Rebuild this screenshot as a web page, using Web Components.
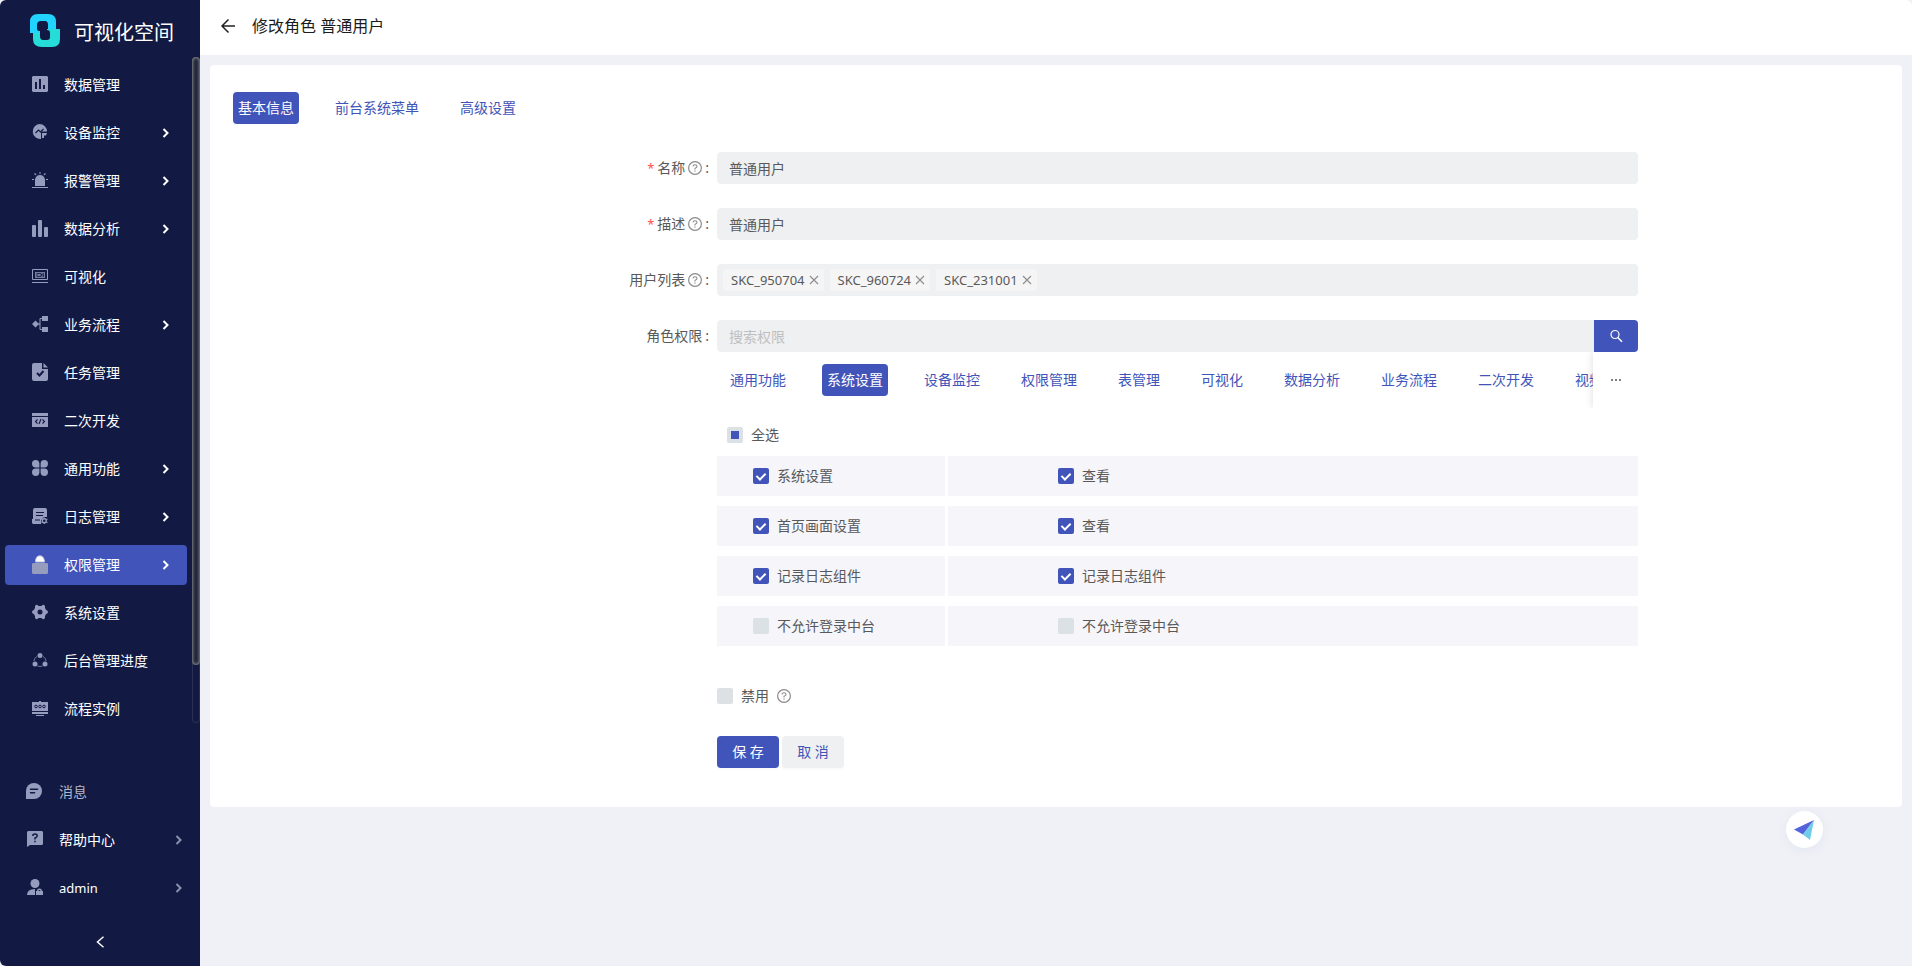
<!DOCTYPE html>
<html lang="zh-CN">
<head>
<meta charset="utf-8">
<title>可视化空间</title>
<style>
  html, body { margin: 0; }
  body {
    --primary: #4154b9;
    --side: #121a44;
    --page: #f0f1f6;
    --field: #eff0f2;
    --text: #595959;
    background: var(--page);
    color: var(--text);
    font: 14px/22px "Noto Sans", "Noto Sans CJK SC", sans-serif;
  }
</style>
</head>
<body>
<vis-app></vis-app>

<template id="vis-app">
  <style>
    :host { display: flex; min-height: 100vh; }
    main { flex: 1; min-width: 0; display: flex; flex-direction: column; }
    role-form { margin: 10px; }
  </style>
  <app-sidebar></app-sidebar>
  <main>
    <page-header>修改角色 普通用户</page-header>
    <role-form></role-form>
  </main>
  <assist-button></assist-button>
</template>

<template id="app-sidebar">
  <style>
    :host {
      display: flex; flex-direction: column; flex: none; box-sizing: border-box;
      width: 200px; height: 100vh; position: sticky; top: 0;
      background: var(--side); color: #fff; border-radius: 6px 0 0 6px;
    }
    .brand { display: flex; align-items: center; gap: 14px; height: 57px; padding: 4px 0 0 30px; box-sizing: border-box; flex: none; font-size: 20px; line-height: 28px; }
    .brand svg { width: 30px; height: 33px; }
    .brand span { padding-top: 4px; }
    .scroll { flex: 1; min-height: 0; display: flex; }
    nav { display: flex; flex-direction: column; gap: 8px; }
    .scroll nav { flex: 1; overflow: hidden; padding: 8px 5px 0; }
    .track { width: 8px; box-sizing: border-box; border-radius: 4px; box-shadow: inset 0 0 0 1px #2b3154; }
    .thumb { height: 608px; border-radius: 4px; background: #20263b; box-shadow: inset 0 0 3px 1px #858585; }
    .foot { flex: none; padding: 49px 6px 10px 0; }
    button { flex: none; display: flex; justify-content: center; align-items: center; height: 48px; border: 0; padding: 0; background: none; color: #fff; }
  </style>
  <div class="brand">
    <svg viewBox="0 0 30 33" aria-hidden="true">
      <path fill="#26dcd9" d="M3 17H10V22Q10 26 13 26H17Q20 26 20 23V19Q20 16 17 16V15H30V25Q30 33 22 33H12Q3 33 3 25Z"/>
      <path fill="#20d4ff" d="M0 19V8Q0 0 8 0H18Q26 0 26 8V15H18V11Q18 7 15 7H11Q7 7 7 11V15Q7 17 10 17V19Z"/>
    </svg>
    <span>可视化空间</span>
  </div>
  <div class="scroll">
    <nav aria-label="主菜单">
      <nav-item icon="data">数据管理</nav-item>
      <nav-item icon="monitor" more>设备监控</nav-item>
      <nav-item icon="alarm" more>报警管理</nav-item>
      <nav-item icon="bars" more>数据分析</nav-item>
      <nav-item icon="visual">可视化</nav-item>
      <nav-item icon="flow" more>业务流程</nav-item>
      <nav-item icon="task">任务管理</nav-item>
      <nav-item icon="code">二次开发</nav-item>
      <nav-item icon="clover" more>通用功能</nav-item>
      <nav-item icon="log" more>日志管理</nav-item>
      <nav-item icon="lock" more active>权限管理</nav-item>
      <nav-item icon="gear">系统设置</nav-item>
      <nav-item icon="nodes">后台管理进度</nav-item>
      <nav-item icon="screen">流程实例</nav-item>
    </nav>
    <div class="track"><div class="thumb"></div></div>
  </div>
  <nav class="foot" aria-label="用户菜单">
    <nav-item foot dim icon="message">消息</nav-item>
    <nav-item foot more icon="help">帮助中心</nav-item>
    <nav-item foot more latin icon="user">admin</nav-item>
  </nav>
  <button type="button" aria-label="收起菜单"><app-icon name="left"></app-icon></button>
</template>

<template id="nav-item">
  <style>
    :host { display: block; flex: none; }
    a { display: flex; align-items: center; box-sizing: border-box; height: 40px; padding: 0 17px 0 27px; gap: 16px; border-radius: 4px; color: #fff; text-decoration: none; }
    .icon { color: #969cbe; margin-bottom: 2px; }
    .label { flex: 1; }
    .more { display: none; }
    :host([more]) .more { display: block; }
    :host([active]) a { background: var(--primary); }
    :host([foot]) a { padding: 0 11px 0 26px; }
    :host([foot]) .more { color: #8a90ae; }
    :host([dim]) a { color: #b4b7c6; }
    :host([latin]) a { font-size: 13px; }
  </style>
  <a href="#"><app-icon class="icon"></app-icon><span class="label"><slot></slot></span><app-icon class="more" name="right"></app-icon></a>
</template>

<template id="page-header">
  <style>
    :host { display: flex; align-items: center; gap: 16px; height: 55px; box-sizing: border-box; padding: 0 20px 3px; background: #fff; color: #1c1c1c; border-radius: 0 6px 0 0; }
    button { display: flex; border: 0; padding: 0; background: none; color: #222; }
    h1 { margin: 0; font-size: 16px; line-height: 24px; font-weight: 400; }
  </style>
  <button type="button" aria-label="返回"><app-icon name="back"></app-icon></button>
  <h1><slot></slot></h1>
</template>

<template id="tab-list">
  <style>
    :host { display: flex; overflow: hidden; gap: 31px; }
    ::slotted(button) { flex: none; height: 32px; border: 0; border-radius: 4px; padding: 0 5px; background: none; color: var(--primary); font: inherit; white-space: nowrap; }
    ::slotted(button[aria-selected="true"]) { background: var(--primary); color: #fff; }
  </style>
  <slot></slot>
</template>

<template id="form-row">
  <style>
    :host { display: grid; grid-template-columns: 484fr 921fr 241fr; }
    .label { display: flex; justify-content: flex-end; align-items: center; height: 32px; gap: 3px; padding-right: 8px; }
    .label i { display: none; width: 7px; color: #ff4d4f; font-size: 13px; font-style: normal; }
    :host([required]) i { display: block; }
    app-icon { display: none; color: #8c8c8c; }
    :host([help]) app-icon { display: block; }
    :host([bare]) .label { visibility: hidden; }
    .control { min-width: 0; }
  </style>
  <div class="label"><i>*</i><slot name="label"></slot><app-icon name="question"></app-icon><span class="colon"></span></div>
  <div class="control"><slot></slot></div>
</template>

<template id="check-box">
  <style>
    :host { display: block; }
    label { display: flex; width: fit-content; align-items: center; gap: 8px; }
    input { appearance: none; margin: 0; width: 16px; height: 16px; border-radius: 2px; background: #dce1e5; display: grid; place-items: center; }
    input:checked { background: var(--primary); }
    input:checked::after { content: ""; width: 4px; height: 7px; margin-bottom: 2px; border: solid #fff; border-width: 0 2px 2px 0; transform: rotate(45deg); }
    input:indeterminate::after { content: ""; width: 8px; height: 8px; background: var(--primary); }
  </style>
  <label><input type="checkbox"><slot></slot></label>
</template>

<template id="user-tag">
  <style>
    :host { display: flex; align-items: center; gap: 4px; height: 22px; padding: 0 5px 0 8px; border-radius: 3px; background: #f5f5f5; font-size: 13px; }
    button { display: flex; border: 0; padding: 0; background: none; color: #8c8c8c; }
  </style>
  <slot></slot><button type="button" aria-label="移除"><app-icon name="close"></app-icon></button>
</template>

<template id="permission-row">
  <style>
    :host { display: grid; grid-template-columns: 228fr 690fr; gap: 3px; }
    div { display: flex; align-items: center; height: 40px; background: #f5f5fa; }
    .group { padding-left: 36px; }
    .items { padding-left: 110px; }
  </style>
  <div class="group"><slot name="group"></slot></div>
  <div class="items"><slot></slot></div>
</template>

<template id="role-form">
  <style>
    :host { display: block; padding: 27px 23px 39px; background: #fff; border-radius: 4px; }
    form { display: flex; flex-direction: column; gap: 24px; padding-top: 28px; }
    .field { box-sizing: border-box; width: 100%; height: 32px; border: 0; border-radius: 4px; padding: 0 12px; background: var(--field); color: var(--text); font: inherit; outline: 0; }
    .field::placeholder { color: #bfbfbf; opacity: 1; }
    .tags { display: flex; align-items: center; gap: 6px; padding: 0 6px; }
    .search { display: flex; }
    .search input { flex: 1; min-width: 0; border-radius: 4px 0 0 4px; }
    .search button { width: 44px; border: 0; border-radius: 0 4px 4px 0; padding: 0; display: grid; place-items: center; background: var(--primary); color: #fff; }
    .bar { display: flex; height: 56px; }
    .bar tab-list { flex: 1; min-width: 0; padding: 12px 0 12px 8px; }
    .bar .more { width: 45px; border: 0; padding: 0; background: #fff; color: #808080; display: grid; place-items: center; box-shadow: 0 0 8px rgba(0,0,0,.14); clip-path: inset(0 0 0 -10px); position: relative; }
    .all { padding: 16px 10px 10px; }
    .rows { display: flex; flex-direction: column; gap: 10px; }
    .off { display: flex; align-items: center; gap: 8px; height: 32px; margin-top: 10px; color: #8c8c8c; }
    .off check-box { color: var(--text); }
    .actions { display: flex; gap: 3px; }
    .actions button { width: 62px; height: 32px; border: 0; border-radius: 4px; padding: 0; font: inherit; background: var(--field); color: var(--primary); box-shadow: 0 2px 0 rgba(0,0,0,.02); }
    .actions .save { background: var(--primary); color: #fff; }
  </style>
  <tab-list role="tablist">
    <button type="button" role="tab" aria-selected="true">基本信息</button>
    <button type="button" role="tab">前台系统菜单</button>
    <button type="button" role="tab">高级设置</button>
  </tab-list>
  <form>
    <form-row required help>
      <label slot="label" for="name">名称</label>
      <input class="field" id="name" value="普通用户">
    </form-row>
    <form-row required help>
      <label slot="label" for="desc">描述</label>
      <input class="field" id="desc" value="普通用户">
    </form-row>
    <form-row help>
      <span slot="label" id="users">用户列表</span>
      <div class="field tags" role="group" aria-labelledby="users">
        <user-tag>SKC_950704</user-tag><user-tag>SKC_960724</user-tag><user-tag>SKC_231001</user-tag>
      </div>
    </form-row>
    <form-row>
      <label slot="label" for="perm">角色权限</label>
      <div class="search">
        <input class="field" id="perm" placeholder="搜索权限">
        <button type="button" aria-label="搜索"><app-icon name="search"></app-icon></button>
      </div>
      <div class="bar">
        <tab-list role="tablist">
          <button type="button" role="tab">通用功能</button>
          <button type="button" role="tab" aria-selected="true">系统设置</button>
          <button type="button" role="tab">设备监控</button>
          <button type="button" role="tab">权限管理</button>
          <button type="button" role="tab">表管理</button>
          <button type="button" role="tab">可视化</button>
          <button type="button" role="tab">数据分析</button>
          <button type="button" role="tab">业务流程</button>
          <button type="button" role="tab">二次开发</button>
          <button type="button" role="tab">视频</button>
        </tab-list>
        <button class="more" type="button" aria-label="更多"><app-icon name="dots"></app-icon></button>
      </div>
      <check-box class="all" mixed>全选</check-box>
      <div class="rows">
        <permission-row><check-box slot="group" checked>系统设置</check-box><check-box checked>查看</check-box></permission-row>
        <permission-row><check-box slot="group" checked>首页画面设置</check-box><check-box checked>查看</check-box></permission-row>
        <permission-row><check-box slot="group" checked>记录日志组件</check-box><check-box checked>记录日志组件</check-box></permission-row>
        <permission-row><check-box slot="group">不允许登录中台</check-box><check-box>不允许登录中台</check-box></permission-row>
      </div>
    </form-row>
    <form-row bare>
      <div class="off"><check-box>禁用</check-box><app-icon name="question"></app-icon></div>
    </form-row>
    <form-row bare>
      <div class="actions"><button class="save" type="button">保 存</button><button type="button">取 消</button></div>
    </form-row>
  </form>
</template>

<template id="assist-button">
  <style>
    :host { position: fixed; right: 89px; bottom: 118px; }
    button { display: grid; place-items: center; width: 37px; height: 37px; border: 0; border-radius: 50%; padding: 0; background: #fff; box-shadow: 0 2px 12px rgba(80,110,220,.08); }
    svg { width: 21px; height: 21px; }
  </style>
  <button type="button" aria-label="助手">
    <svg viewBox="0 0 21 21"><path fill="#5463dc" d="M0 10.500 20 1 9 15.500z"/><path fill="#70cdea" d="M20 1 16 21 9 15.500z"/></svg>
  </button>
</template>

<script>
  const ICONS = {
    data: [16, 16, '<path fill="currentColor" fill-rule="evenodd" d="M1 0h14l1 1v14l-1 1H1l-1-1V1zM3 6v7h2V6zm4-3v10h2V3zm4 6v4h2V9z"/>'],
    monitor: [16, 16, '<path fill="currentColor" d="M7.500 0a7.500 7.500 0 0 1 7.500 7.500H9V15A7.500 7.500 0 1 1 7.500 0"/><path fill="none" stroke="#121a44" stroke-width="1.200" d="m3.500 9 3-3 2 2 3-3"/><path fill="currentColor" d="M10 9h5l-1 2.500h-2V14h-2z"/>'],
    alarm: [16, 16, '<path fill="currentColor" d="M3 14V8a5 5 0 0 1 10 0v6zM0 15h16v1H0zM7.500 0h1v2h-1zM2 2l1-1 1.500 1.500-.8.800zM14 2l-1-1-1.500 1.500.8.800zM0 7h2v1H0zM14 7h2v1h-2z"/>'],
    bars: [16, 17, '<rect fill="currentColor" y="5" width="4" height="12" rx="1"/><rect fill="currentColor" x="6" width="4" height="17" rx="1"/><rect fill="currentColor" x="12" y="7" width="4" height="10" rx="1"/>'],
    visual: [16, 14, '<path fill="none" stroke="currentColor" d="M.5.500h15v10H.500zM0 13.500h16"/><path fill="currentColor" opacity=".75" d="M3 3h10v6H3z"/><path fill="none" stroke="#121a44" stroke-width=".8" d="M5 4.500h4v3H5zM9 6l2.500-1.500v3z"/>'],
    flow: [16, 16, '<path fill="currentColor" d="m3.500 4.500 3.500 3.500-3.500 3.500L0 8zM10 0h6v5h-6zM10 11h6v5h-6z"/><path fill="none" stroke="currentColor" d="M10 2.500H8v11h2M6 8h2"/>'],
    task: [16, 18, '<path fill="currentColor" d="M2 0h8v6h6v10q0 2-2 2H2q-2 0-2-2V2q0-2 2-2m9.500 0L16 4.500h-4.500z"/><path fill="none" stroke="#121a44" stroke-width="2" d="m5 10 2.500 2.500L11.500 8"/>'],
    code: [16, 14, '<path fill="currentColor" d="M0 0h16v3H0zM0 4h16v10H0z"/><path fill="none" stroke="#121a44" stroke-width="1.100" d="M5.500 6.500 3.500 8.500l2 2M10.500 6.500l2 2-2 2M9 6l-2 5"/>'],
    clover: [16, 16, '<path fill="currentColor" d="M3.700 0A3.600 3.600 0 0 1 7.400 3.700V7.400H3.700A3.700 3.700 0 0 1 3.700 0M12.300 0a3.700 3.700 0 0 1 0 7.400H8.600V3.700A3.700 3.700 0 0 1 12.300 0M3.700 8.600h3.700v3.700a3.700 3.700 0 1 1-3.700-3.700M8.600 8.600h3.700a3.700 3.700 0 1 1-3.700 3.700z"/>'],
    log: [16, 16, '<path fill="currentColor" d="M3 0h10q2 0 2 2v7h-3l-3 3v4H1l-1-1v-4h1V2q0-2 2-2"/><path stroke="#121a44" d="M4 4.500h8M4 7.500h7M3 12h5"/><circle cx="12.300" cy="12.800" r="2" fill="none" stroke="currentColor" stroke-width="1.400"/><path stroke="currentColor" stroke-width="1.200" d="M12.300 9.500v1M12.300 15v1M9.500 11l1 .6M15.400 11l-1 .6M9.500 14.700l1-.6M15.400 14.700l-1-.6"/>'],
    lock: [16, 19, '<path fill="#fff" stroke="#b9bfdf" d="M3.500 7V6Q4 .800 7.800.800T12.500 6v1z"/><path fill="#969cbe" d="M1 8h14l1 1v9l-1 1H1l-1-1V9z"/>'],
    gear: [16, 16, '<path fill="currentColor" fill-rule="evenodd" d="M4 1Q5 .300 6.500 2h3Q11 .300 12 1q1.500.700 1 3l1.200 2Q16 6.300 16 8t-1.800 2L13 12q.5 2.300-1 3-1 .7-2.500-1h-3Q5 15.700 4 15q-1.500-.7-1-3l-1.200-2Q0 9.700 0 8t1.800-2L3 4Q2.500 1.700 4 1m4 4.500a2.500 2.500 0 1 0 0 5 2.500 2.500 0 0 0 0-5"/>'],
    nodes: [16, 14, '<g fill="currentColor"><circle cx="8" cy="2.500" r="2.500"/><circle cx="3" cy="11" r="2.500"/><circle cx="13" cy="11" r="2.500"/></g><path fill="none" stroke="currentColor" opacity=".7" d="M5 3.500Q2 5 2 8M11 3.500q3 1.500 3 4.500M5.500 13q2.500 1 5 0"/>'],
    screen: [16, 15, '<path fill="currentColor" d="M0 1h7V0h2v1h7v9H0zM0 11h16v2H0zM4 14h8v1H4z"/><g fill="none" stroke="#121a44"><circle cx="4" cy="5.500" r="1.300"/><circle cx="8" cy="5.500" r="1.300"/><circle cx="12" cy="5.500" r="1.300"/></g>'],
    message: [17, 16, '<path fill="currentColor" d="M8 0a8 8 0 0 1 0 16H0V8a8 8 0 0 1 8-8"/><path stroke="#121a44" stroke-width="1.500" stroke-linecap="round" d="M4.500 6.200h7M4.500 9.800h4"/>'],
    help: [17, 16, '<path fill="currentColor" d="M2 0h14l1 1v12l-1 1H4l-3 2V1z"/><path fill="none" stroke="#121a44" stroke-width="1.500" d="M6.800 5q0-2 2.200-2t2.200 2Q11 6.200 9 7v1.500M9 9.700v1.600"/>'],
    user: [17, 16, '<circle cx="9" cy="4.500" r="4.500" fill="currentColor"/><path fill="currentColor" fill-rule="evenodd" d="M1 16q0-6 8-6v6zM10 12h1a2.500 2.500 0 0 1 5 0h1v4h-7zm2.200 0h2.600q-1.300-2-2.600 0"/>'],
    right: [8, 10, '<path fill="none" stroke="currentColor" stroke-width="2" d="m1.500 1 4 4-4 4"/>'],
    left: [8, 12, '<path fill="none" stroke="currentColor" stroke-width="1.500" d="M7.500.800 1.500 6l6 5.200"/>'],
    back: [16, 16, '<path fill="none" stroke="currentColor" stroke-width="1.500" d="M15 8H2M8.500 1.500 2 8l6.500 6.500"/>'],
    question: [14, 14, '<circle cx="7" cy="7" r="6.400" fill="none" stroke="currentColor" stroke-width="1.200"/><path fill="none" stroke="currentColor" stroke-width="1.100" d="M5 5.500Q5 3.700 7 3.700t2 1.700Q9 6.500 7 7.200v1.300M7 9.600v1.200"/>'],
    close: [10, 10, '<path stroke="currentColor" stroke-width="1.100" d="m1 1 8 8M9 1 1 9"/>'],
    search: [14, 14, '<circle cx="6" cy="5.500" r="4" fill="none" stroke="currentColor" stroke-width="1.200"/><path stroke="currentColor" stroke-width="1.500" d="m8.800 8.500 4.200 4.300"/>'],
    dots: [12, 4, '<path fill="currentColor" d="M1 1h2v2H1zM5 1h2v2H5zM9 1h2v2H9z"/>']
  };

  class Base extends HTMLElement {
    constructor() {
      super();
      const root = this.attachShadow({ mode: 'open' });
      const template = document.getElementById(this.localName);
      if (template) root.append(template.content.cloneNode(true));
    }
  }
  const define = (name, type = class extends Base {}) => customElements.define(name, type);

  define('app-icon', class extends Base {
    static observedAttributes = ['name'];
    attributeChangedCallback() {
      const [w, h, body] = ICONS[this.getAttribute('name')];
      this.shadowRoot.innerHTML = `<style>:host{display:block;flex:none}svg{display:block}</style><svg width="${w}" height="${h}" viewBox="0 0 ${w} ${h}" aria-hidden="true">${body}</svg>`;
    }
  });
  define('nav-item', class extends Base {
    connectedCallback() {
      this.shadowRoot.querySelector('.icon').setAttribute('name', this.getAttribute('icon'));
    }
  });
  define('check-box', class extends Base {
    connectedCallback() {
      const box = this.shadowRoot.querySelector('input');
      box.checked = this.hasAttribute('checked');
      box.indeterminate = this.hasAttribute('mixed');
    }
  });
  define('form-row', class extends Base {
    connectedCallback() {
      if (!this.hasAttribute('bare')) this.shadowRoot.querySelector('.colon').textContent = ':';
      if (!this.hasAttribute('required')) this.shadowRoot.querySelector('i')?.remove();
    }
  });
  ['tab-list', 'user-tag', 'permission-row', 'page-header', 'assist-button', 'role-form', 'app-sidebar', 'vis-app'].forEach(name => define(name));
</script>
</body>
</html>
